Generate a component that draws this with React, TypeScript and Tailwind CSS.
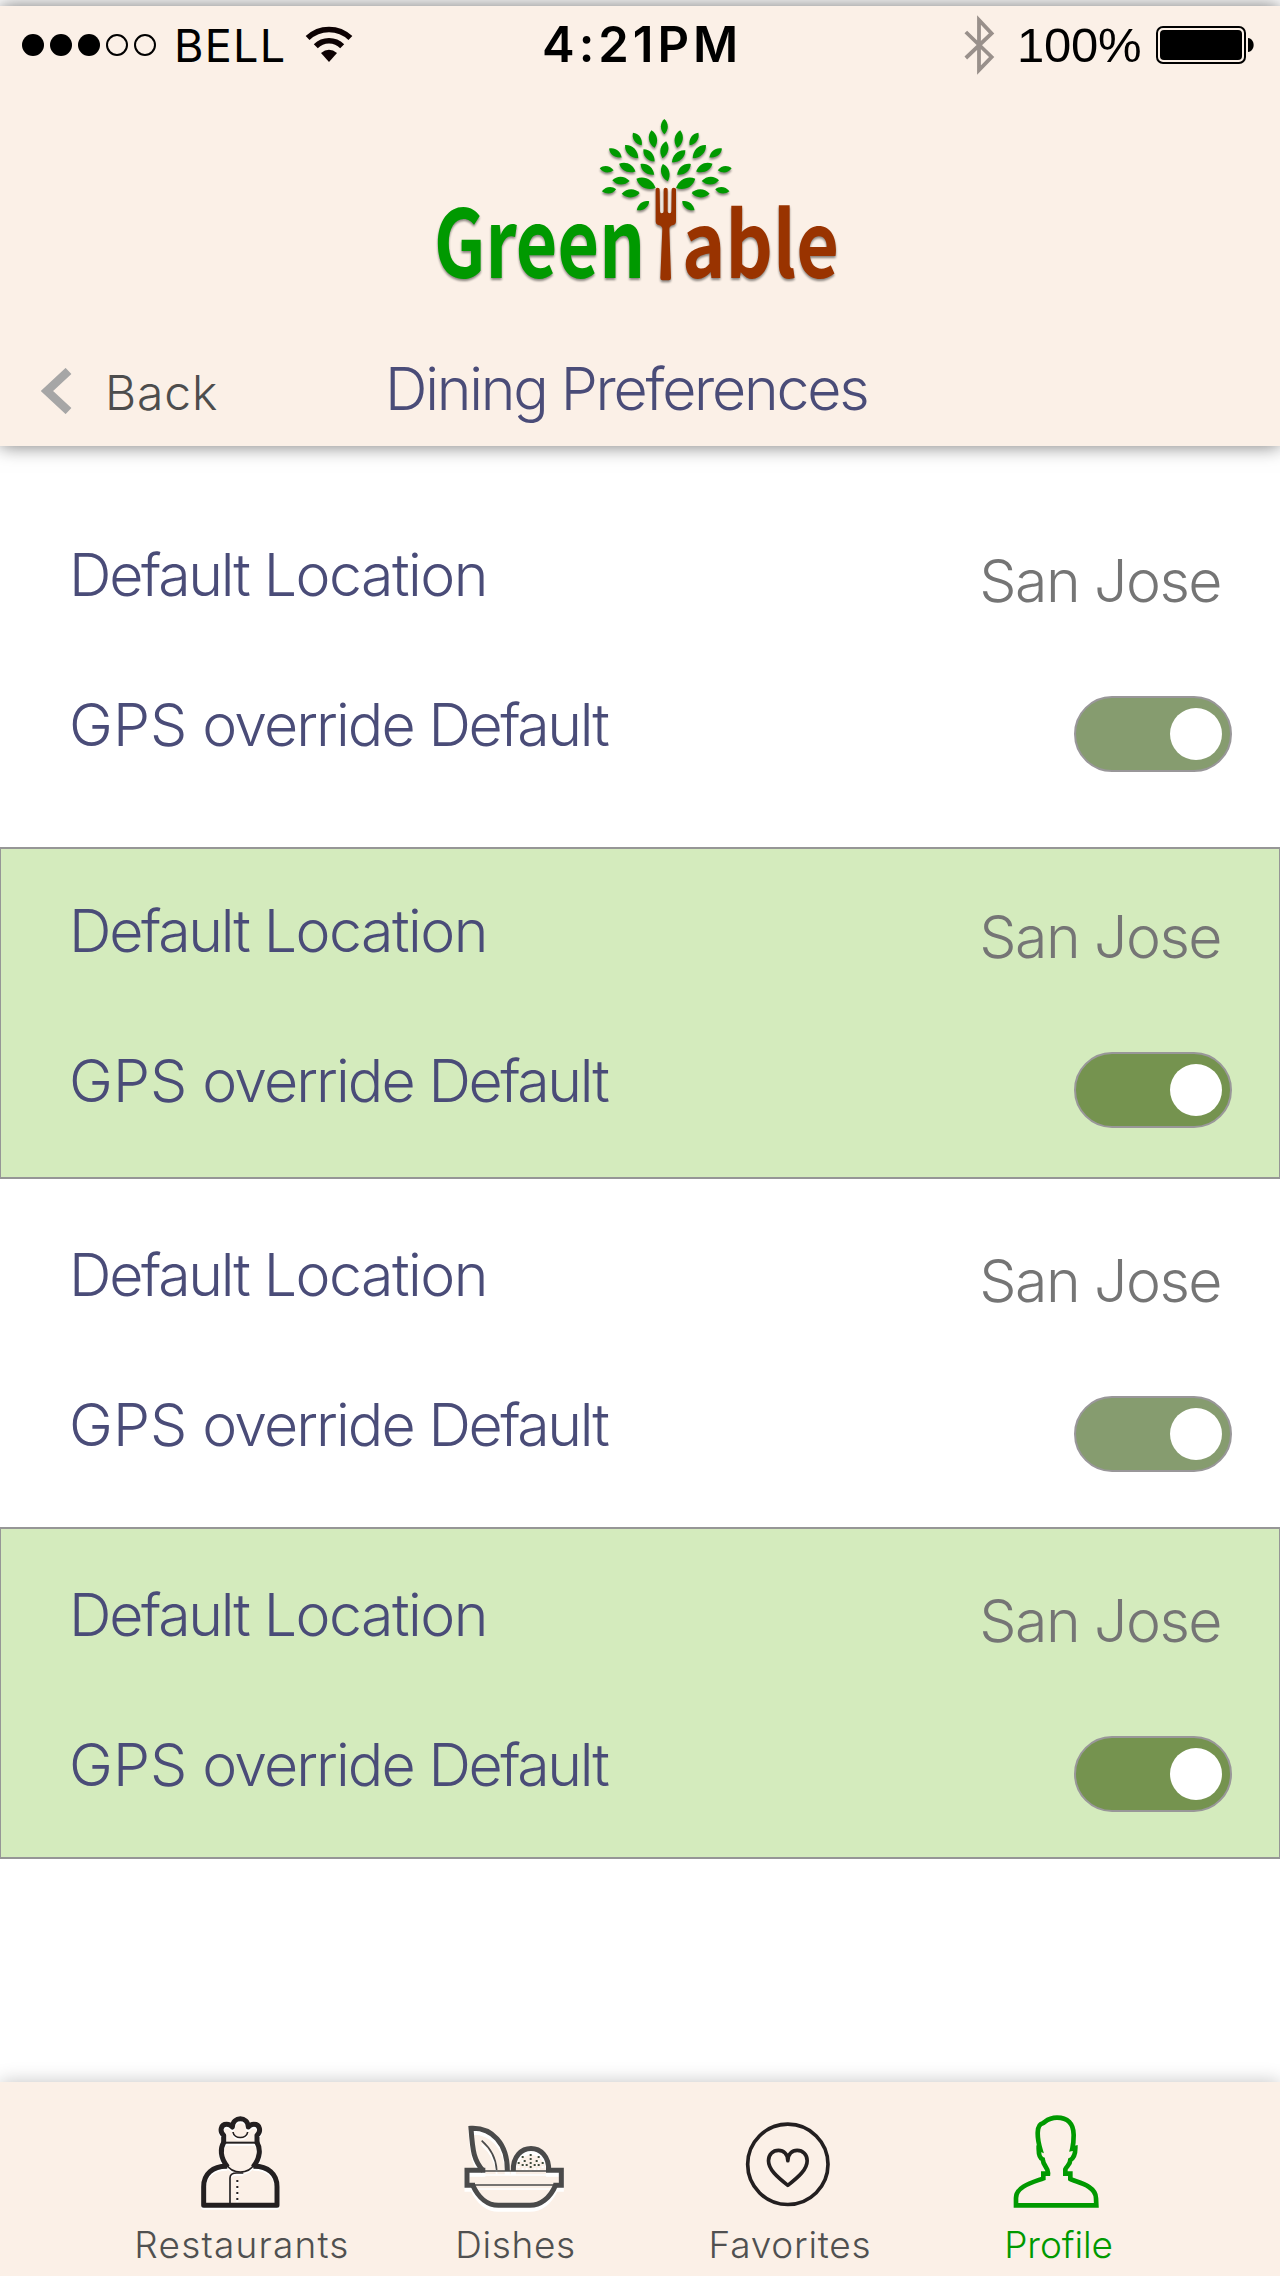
import React from "react";

const INTER = "font-['Inter','Liberation_Sans',sans-serif]";

/* ---------- Status bar ---------- */

function StatusBar() {
  return (
    <div className="flex h-[78px] items-center pl-[22px] pr-[26px] text-black">
      <div className="flex w-[520px] items-center">
        <div className="flex gap-[6px]">
          {[true, true, true, false, false].map((on, i) => (
            <span
              key={i}
              className={
                on
                  ? "size-[22px] rounded-full bg-black"
                  : "size-[22px] rounded-full border-2 border-black"
              }
            />
          ))}
        </div>
        <span className="ml-[18px] text-[45px] leading-none tracking-[1.3px]">BELL</span>
        <svg className="ml-[18px] -mt-[2px]" width="48" height="37" viewBox="0 0 48 37" fill="none">
          <path d="M2.6 12 A31 31 0 0 1 45.4 12" stroke="#0d0203" strokeWidth="5.6" />
          <path d="M10.8 20.2 A18.6 18.6 0 0 1 37.2 20.2" stroke="#0d0203" strokeWidth="5.6" />
          <path d="M16 27 Q24 20.5 32 27 L24 36 Z" fill="#0d0203" />
        </svg>
      </div>
      <span className="-mt-px text-[49px] font-semibold leading-none tracking-[4px]">4:21PM</span>
      <div className="ml-auto flex items-center">
        <svg width="31" height="60" viewBox="0 0 31 60" fill="none">
          <path d="M1.8 17 L27.6 42 L15 55 V5 L27.6 18.5 L1.8 43" stroke="#99908b" strokeWidth="3.8" />
        </svg>
        <span className="ml-[22px] w-[139px] font-['Liberation_Sans'] text-[49px] leading-none tracking-[-0.25px]">
          100%
        </span>
        <svg width="98" height="38" viewBox="0 0 98 38">
          <rect x="1" y="1" width="88" height="36" rx="6" fill="none" stroke="#000" strokeWidth="2" />
          <rect x="4" y="4" width="82" height="30" rx="4" fill="#000" />
          <path d="M92 12 C99.500 13 99.500 25 92 26 Z" fill="#000" />
        </svg>
      </div>
    </div>
  );
}

/* ---------- Logo ---------- */

// [centre x, centre y, length, tilt from vertical]
const leaves: [number, number, number, number][] = [
  [733, 80, 46, 0],
  [652, 117, 46, -35],
  [699, 117, 54, -10],
  [776, 117, 54, 10],
  [822, 117, 46, 35],
  [586, 159, 46, -55],
  [635, 155, 56, -45],
  [687, 166, 50, -42],
  [733, 149, 52, 12],
  [776, 169, 54, 48],
  [838, 155, 56, 45],
  [887, 159, 46, 55],
  [560, 208, 42, -82],
  [622, 203, 54, -65],
  [682, 208, 52, -52],
  [736, 218, 54, -16],
  [792, 208, 52, 52],
  [853, 203, 54, 65],
  [914, 208, 42, 82],
  [603, 242, 52, -88],
  [678, 250, 64, -64],
  [797, 250, 64, 64],
  [871, 242, 52, 88],
  [567, 271, 43, 82],
  [632, 280, 54, 88],
  [842, 280, 54, -88],
  [907, 271, 43, -82],
  [669, 317, 46, 54],
  [805, 317, 46, -54],
];

function Logo() {
  return (
    <svg
      className="drop-shadow-[0_2px_1px_rgba(0,0,0,0.45)]"
      width="430"
      height="200"
      viewBox="0 0 1290 600"
      overflow="visible"
      fontFamily="'Noto Sans CJK SC', 'Open Sans', sans-serif"
      fontWeight="700"
      fontSize="282"
    >
      {leaves.map(([x, y, len, tilt], i) => (
        <path
          key={i}
          fill="#090"
          transform={`translate(${x} ${y}) rotate(${tilt}) scale(${len / 50})`}
          d="M0 -25 C15 -12 15 10 0 25 C-15 10 -15 -12 0 -25 Z"
        />
      ))}
      <path
        fill="#930"
        d="M707 268 Q707 263 713 263 Q719 263 719 268 L720 334 Q720 340 725 340 Q731 340 731 334 L731 268 Q731 263 737 263 Q743 263 743 268 L743 334 Q743 340 749 340 Q754 340 754 334 L755 268 Q755 263 761 263 Q768 263 768 268 L768 364 Q768 373 760 375 Q748 378 748 386 L753 534 Q753 541 746 541 L728 541 Q721 541 721 534 L727 386 Q727 378 715 375 Q707 373 707 364 Z"
      />
      <text transform="translate(42 533) scale(0.763 1)" fill="#090">
        Green
      </text>
      <text transform="translate(786 534) scale(0.784 0.965)" fill="#930">
        able
      </text>
    </svg>
  );
}

/* ---------- Header ---------- */

function Header() {
  return (
    <header className="relative z-10 h-[440px] shrink-0 bg-[#fbf0e7] shadow-[0_0_18px_rgba(0,0,0,0.54)]">
      <StatusBar />
      <div className="mt-[16px] flex pl-[420px]">
        <Logo />
      </div>
      <div className="flex items-baseline pl-[41px] pt-[57px]">
        <svg className="mt-[11px] self-start" width="31" height="46" viewBox="0 0 31 46" fill="none">
          <path d="M27.500 3 L6 23 L27.500 43" stroke="#a6a6a6" strokeWidth="8.5" />
        </svg>
        <button className="ml-[33px] w-[280px] text-left text-[48px] font-light leading-[64px] tracking-[0.9px] text-[#4d4d4d]">
          Back
        </button>
        <h1 className="whitespace-nowrap text-[59px] font-light leading-[64px] tracking-[-2.25px] text-[#4a4c78]">
          Dining Preferences
        </h1>
      </div>
    </header>
  );
}

/* ---------- Preference groups ---------- */

function Toggle({ tone }: { tone: string }) {
  return (
    <button
      role="switch"
      aria-checked="true"
      className={`flex h-[76px] w-[158px] items-center justify-end rounded-full border-2 border-[#999799] pr-[8px] ${tone}`}
    >
      <span className="size-[52px] rounded-full bg-white" />
    </button>
  );
}

function Group({ box, tone }: { box: string; tone: string }) {
  return (
    <section className={`shrink-0 text-[59px] font-light leading-[58px] text-[#4a4c78] ${box}`}>
      <div className="flex h-[76px] items-start justify-between pl-[69px] pr-[59px]">
        <span className="tracking-[-1.5px]">
          <span className="tracking-[-2.3px]">Default</span> Location
        </span>
        <span className="mt-[6px] tracking-[-1.55px] text-[#757575]">San Jose</span>
      </div>
      <div className="mt-[74px] flex h-[76px] items-start justify-between pl-[69px] pr-[48px]">
        <span className="tracking-[-1.9px]">
          <span className="tracking-[0.1px]">GPS</span> override{" "}
          <span className="tracking-[-2.4px]">Default</span>
        </span>
        <Toggle tone={tone} />
      </div>
    </section>
  );
}

/* ---------- Tab icons ---------- */

function ChefIcon() {
  return (
    <svg className="drop-shadow-[0_2px_0_#fff]" width="110" height="100" viewBox="231 120 330 300" fill="none" stroke="#231f20">
      <g strokeWidth="15" strokeLinejoin="round">
        <path d="M341 222 V196 C328 184 332 163 350 163 C358 163 364 167 367 171 C369 138 413 138 415 171 C418 167 424 163 432 163 C450 163 454 184 441 196 V222" />
        <path d="M341 218 C331 234 329 262 353 291" />
        <path d="M441 218 C451 234 453 262 429 291" />
        <path d="M352 289 C308 288 281 312 281 350 V406 H501 V350 C501 312 474 288 430 289" />
      </g>
      <g strokeWidth="5">
        <path d="M345 218 H437" strokeWidth="6" />
        <path d="M369 186 C372 208 410 208 413 186" />
        <path d="M350 284 C360 302 374 306 391 306 C408 306 422 302 432 284" />
        <path d="M360 400 V324 C360 312 368 309 380 309 H400" />
      </g>
      <path d="M382 330 V392" strokeWidth="6" strokeDasharray="6 12" />
    </svg>
  );
}

const seeds: [number, number][] = [
  [332, 255], [308, 261], [356, 261], [332, 267], [314, 273], [350, 273], [368, 279],
  [296, 279], [332, 279], [308, 285], [320, 285], [344, 285], [356, 285], [332, 291],
];

function DishIcon() {
  return (
    <svg className="drop-shadow-[0_4px_0_#fff]" width="110" height="100" viewBox="123 120 330 300" overflow="visible" fill="none" stroke="#4a4a4a">
      <g strokeWidth="15">
        <path d="M196 301 H141 V346 H165" />
        <path d="M378 301 H424 V346 H400" />
        <path d="M158 345 C176 386 205 406 235 406 H330 C360 406 390 386 407 345" />
        <path d="M190 303 C162 272 158 245 153 175 C215 172 263 220 262 303" />
        <path d="M280 303 C276 213 390 213 386 303" />
      </g>
      <g strokeWidth="5">
        <path d="M190 303 H385" />
        <path d="M150 345 H415" />
        <path d="M185 212 C215 238 228 265 230 300" />
      </g>
      {seeds.map(([x, y], i) => (
        <rect key={i} x={x - 3} y={y - 3} width="6" height="6" fill="#3f4a3a" stroke="none" />
      ))}
    </svg>
  );
}

function HeartIcon() {
  return (
    <svg className="-ml-px" width="110" height="100" viewBox="166.5 120 330 300" fill="none" stroke="#231f20" strokeWidth="11">
      <circle cx="325" cy="283" r="120.500" />
      <path d="M325 272 C325 252 312 241 297 241 C280 241 267 254 267 272 C267 298 292 320 325 346 C358 320 383 298 383 272 C383 254 370 241 353 241 C338 241 325 252 325 272 Z" strokeLinejoin="round" />
    </svg>
  );
}

function ProfileIcon() {
  return (
    <svg width="110" height="100" viewBox="132 120 330 300" fill="none" stroke="#090" strokeWidth="14">
      <path d="M241 238 C230 200 229 164 248 160 C260 152 266 143 291 143 C322 143 341 160 341 195 C341 210 340 224 337 236 L346 234 C346 254 338 266 331 270 C330 286 320 288 316 298 V311 H331 V327 C345 336 408 344 408 385 L409 406 H168 V384 C168 350 215 338 250 325 V311 H264 C266 293 250 290 248 268 C240 265 236 252 236 236 Z" />
    </svg>
  );
}

function Tab({ icon, label, look }: { icon: React.ReactNode; label: string; look: string }) {
  return (
    <a className={`flex flex-col items-center ${look}`}>
      {icon}
      <span className="mt-[13px] text-[37px] font-light leading-[44px]">{label}</span>
    </a>
  );
}

export default function App() {
  return (
    <div className={`flex h-[2276px] w-[1280px] flex-col overflow-hidden bg-white pt-[6px] ${INTER}`}>
      <Header />
      <main className="flex flex-1 flex-col">
        <Group box="h-[401px] pt-[100px]" tone="bg-[#869c6f]" />
        <Group
          box="h-[332px] border-x border-y-2 border-[#969696] bg-[#d4ebbd] pt-[53px] [&>div]:-mx-px"
          tone="bg-[#75934f]"
        />
        <Group box="h-[348px] pt-[67px]" tone="bg-[#869c6f]" />
        <Group
          box="h-[332px] border-x border-y-2 border-[#969696] bg-[#d4ebbd] pt-[57px] [&>div]:-mx-px"
          tone="bg-[#75934f]"
        />
      </main>
      <nav className="relative z-10 flex h-[194px] shrink-0 bg-[#fbf0e7] pl-[105px] pt-[28px] shadow-[0_0_18px_rgba(0,0,0,0.24)]">
        <Tab icon={<ChefIcon />} label="Restaurants" look="w-[274px] text-[#505050] tracking-[1.2px]" />
        <Tab icon={<DishIcon />} label="Dishes" look="w-[273px] text-[#505050] tracking-[0.6px]" />
        <Tab icon={<HeartIcon />} label="Favorites" look="w-[276px] text-[#505050] tracking-[0.75px]" />
        <Tab icon={<ProfileIcon />} label="Profile" look="w-[261px] text-[#090] tracking-[-0.1px]" />
      </nav>
    </div>
  );
}
